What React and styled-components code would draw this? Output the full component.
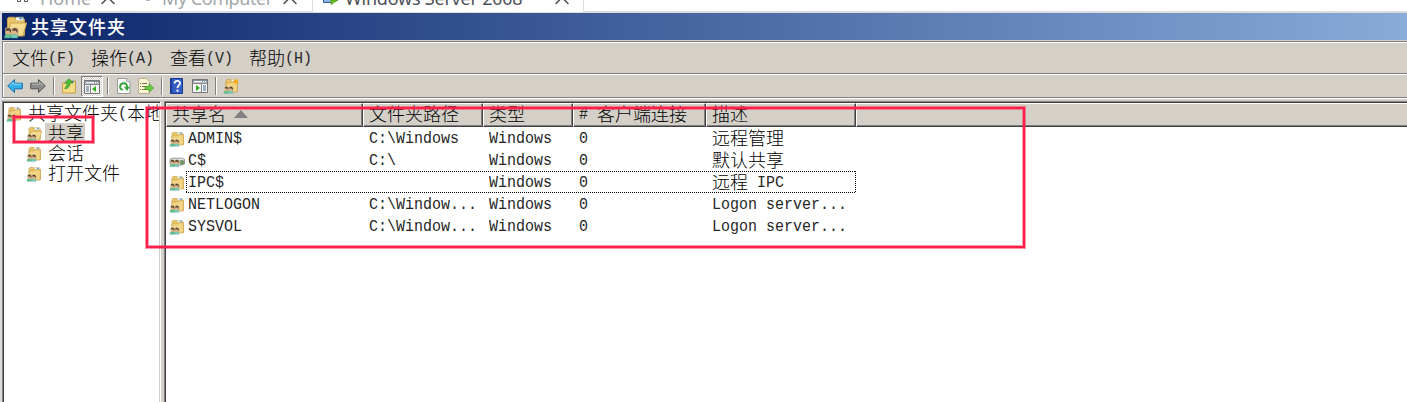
import React from 'react';
import styled, { createGlobalStyle, css } from 'styled-components';

const GlobalStyle = createGlobalStyle`
  * { box-sizing: border-box; }
  body { margin: 0; background: #dcdde1; overflow: hidden; }
  svg { display: block; flex: none; }
`;

const face = '#d4d0c8';
const gray = '#808080';
const dark = '#404040';

const Screen = styled.div`
  position: relative;
  width: 1407px;
  height: 402px;
  overflow: hidden;
  display: flex;
  flex-direction: column;
  font: 300 18px/20px 'Noto Sans CJK SC', sans-serif;
  color: #000;
`;

/* Host tab strip */
const TabStrip = styled.div`
  flex: none;
  display: flex;
  height: 13px;
  overflow: hidden;
`;
const Tab = styled.div`
  display: flex;
  align-items: flex-start;
  justify-content: space-between;
  width: ${(p) => p.$width}px;
  flex: ${(p) => (p.$rest ? '1' : 'none')};
  height: ${(p) => (p.$active ? 12 : 11)}px;
  padding: 0 ${(p) => p.$right || 0}px 0 ${(p) => p.$left || 0}px;
  background: #fff;
  color: ${(p) => (p.$active ? '#4d5159' : '#a3a6ab')};
  ${(p) => p.$active && css`border: solid #dcdde1; border-width: 0 1px;`}
`;
const TabLabel = styled.span`
  display: flex;
  gap: ${(p) => p.$gap}px;
  font: 400 18px/24px 'Noto Sans', sans-serif;
  letter-spacing: ${(p) => p.$spacing || 0}px;
  margin-top: -14px;
  white-space: nowrap;
  svg { margin-top: 14px; }
`;

/* Window */
const Win = styled.div`
  flex: 1;
  min-height: 0;
  margin-left: 2px;
  display: flex;
  flex-direction: column;
  background: ${face};
`;
const TitleBar = styled.div`
  flex: none;
  height: 27px;
  display: flex;
  align-items: center;
  padding: 0 0 2px 1px;
  gap: 4px;
  background: linear-gradient(90deg, #0a246a, #88abd9);
  color: #fff;
  font-weight: 500;
  letter-spacing: 1px;
  svg { margin-top: 2px; }
`;
const Bar = styled.div`
  flex: none;
  display: flex;
  align-items: center;
  height: ${(p) => p.$height}px;
  border-top: 1px solid ${gray};
  border-left: 1px solid ${gray};
  box-shadow: inset 1px 1px #fff;
`;
const MenuBar = styled(Bar)`
  margin-top: 1px;
  padding: 1px 0 0 9px;
  gap: 16px;
`;
const ToolBar = styled(Bar)`
  padding: 1px 0 0 4px;
`;
const ToolGroup = styled.div`
  display: flex;
  align-items: center;
  gap: ${(p) => p.$gap}px;
`;
const PressedTool = styled.div`
  display: flex;
  align-items: center;
  justify-content: center;
  width: 22px;
  height: 21px;
  background: conic-gradient(#fff 25%, ${face} 0 50%, #fff 0 75%, ${face} 0) 0 0 / 2px 2px;
  border: 1px solid;
  border-color: ${gray} #fff #fff ${gray};
  svg { margin-top: 2px; }
`;
const Separator = styled.div`
  width: 2px;
  height: 18px;
  margin: 0 ${(p) => p.$after}px 0 ${(p) => p.$before}px;
  background: linear-gradient(90deg, ${gray} 50%, #fff 50%);
`;
const Gap = styled.div`
  flex: none;
  height: 4px;
  border-top: 1px solid ${gray};
  box-shadow: inset 0 1px #fff;
`;
const Panes = styled.div`
  flex: 1;
  min-height: 0;
  display: flex;
`;
const Pane = styled.div`
  border: solid ${gray};
  border-width: 1px 0 0 1px;
  background: #fff;
  overflow: hidden;
`;
const Tree = styled(Pane)`
  width: 159px;
  flex: none;
  box-shadow: inset 1px 1px ${dark};
  border-right: 1px solid #fff;
  padding: 1px 1px 0 1px;
  background: linear-gradient(90deg, #fff 156px, ${face} 156px);
`;
const TreeInner = styled.div`
  width: 155px;
  overflow: hidden;
`;
const TreeRow = styled.div`
  display: flex;
  align-items: center;
  height: 20px;
  padding-left: ${(p) => (p.$child ? 22 : 2)}px;
  gap: 3px;
  svg { margin-top: 2px; }
`;
const TreeLabel = styled.span`
  display: block;
  height: 20px;
  padding: 0 1px 0 3px;
  white-space: nowrap;
  background: ${(p) => (p.$selected ? face : 'transparent')};
`;
const List = styled(Pane)`
  flex: 1;
  margin-left: 3px;
  box-shadow: inset 1px 1px ${dark};
  padding: 1px 0 0 1px;
`;
const columns = '197px 120px 90px 133px 150px 1fr';
const Header = styled.div`
  display: grid;
  grid-template-columns: ${columns};
  height: 24px;
`;
const HeadCell = styled.div`
  display: flex;
  align-items: center;
  gap: 8px;
  min-width: 0;
  padding: 0 0 2px 5px;
  background: ${face};
  border: 1px solid;
  border-color: #fff ${dark} ${dark} #fff;
  box-shadow: inset -1px -1px ${gray};
  white-space: nowrap;
  &:last-child { border-right: 0; box-shadow: inset 0 -1px ${gray}; }
`;
const Row = styled.div`
  position: relative;
  display: grid;
  grid-template-columns: ${columns};
  align-items: center;
  height: 22px;
`;
const Focus = styled.div`
  position: absolute;
  left: 20px;
  width: 670px;
  top: 0;
  height: 22px;
  background:
    repeating-linear-gradient(90deg, #000 0 1px, transparent 1px 2px) 0 0 / 100% 1px no-repeat,
    repeating-linear-gradient(90deg, #000 0 1px, transparent 1px 2px) 0 100% / 100% 1px no-repeat,
    repeating-linear-gradient(#000 0 1px, transparent 1px 2px) 0 0 / 1px 100% no-repeat,
    repeating-linear-gradient(#000 0 1px, transparent 1px 2px) 100% 0 / 1px 100% no-repeat;
`;
const Cell = styled.div`
  display: flex;
  align-items: center;
  gap: 3px;
  padding-left: ${(p) => (p.$first ? 3 : 6)}px;
  white-space: nowrap;
  svg { margin-top: 2px; }
`;
const Line = styled.span`
  display: flex;
  align-items: flex-start;
  height: 20px;
`;
const Wide = styled.span`
  line-height: 18px;
`;
const Latin = styled.span`
  width: ${(p) => p.$count * 9}px;
  font: 400 17px/22px 'Liberation Mono', monospace;
  color: #262626;
  transform: scaleX(0.882);
  transform-origin: left;
  white-space: pre;
`;

/* Annotation frames lie over the window */
const Frame = styled.div`
  position: absolute;
  left: ${(p) => p.$x}px;
  top: ${(p) => p.$y}px;
  width: ${(p) => p.$w}px;
  height: ${(p) => p.$h}px;
  border: 2px solid #ff1f4b;
  box-shadow: 0 0 0 1px rgba(255, 31, 75, 0.5), inset 0 0 0 1px rgba(255, 31, 75, 0.45);
`;

/* Half-width runs take 9px per character, full-width ones 18px */
function Text({ children }) {
  const runs = children.match(/[\x20-\x7e]+|[^\x20-\x7e]+/g) || [];
  return (
    <Line>
      {runs.map((run, i) =>
        /^[\x20-\x7e]/.test(run)
          ? <Latin key={i} $count={run.length}>{run}</Latin>
          : <Wide key={i}>{run}</Wide>
      )}
    </Line>
  );
}

function People() {
  return (
    <g>
      <path d="M1.500 8.500h9v5.500h-9z" fill="#d9c08a" />
      <path d="M1 15.300c0-1.700.9-2.500 2.300-2.500s2.200.6 2.600 1.500l-1 1z" fill="#62c796" stroke="#3f9f78" strokeWidth=".4" />
      <path d="M5.300 15.300c0-1.700.9-2.500 2.300-2.500s2.300.8 2.300 2.500z" fill="#7fd0c0" stroke="#3f9f90" strokeWidth=".4" />
      <circle cx="3.400" cy="11.300" r="1.500" fill="#e2b48c" />
      <circle cx="7.800" cy="11.300" r="1.500" fill="#e2b48c" />
      <path d="M1.700 10.500c0-2.500 3.500-2.500 3.700 0v1.700l-1.200-1.700zM6.100 10.500c0-2.500 3.500-2.500 3.700 0v1.700l-1.200-1.700z" fill="#5a4430" />
    </g>
  );
}

function SharedFolder({ size = 16, open, star }) {
  return (
    <svg width={size} height={size} viewBox="0 0 16 16">
      <path d="M3 13.500V2.500l1-1h3.500l1 1.500h5.800v10.500z" fill="#e9c568" stroke="#c7a150" strokeWidth=".7" />
      <path d="M8.500 1.500h5v2.300h-5z" fill="#fff" stroke="#c9b67a" strokeWidth=".5" />
      <path d="M10.800 1.800h2v1h-2z" fill="#318ad8" />
      {open
        ? <path d="M3 14 5 5.300h10.700L13.300 14z" fill="#f6dc90" stroke="#cba650" strokeWidth=".7" />
        : <path d="M3 4.800h5l1-1h5.300V14H3z" fill="#f3d583" stroke="#c59f4a" strokeWidth=".7" />}
      <People />
      {star && <path d="m12.500 0 .8 2 2.700-.7-1.500 2.200 1.500 1.600-2.500-.2-1 2-.8-2-2.500-.2 2-1.500-1-2 2 .7z" fill="#f9ad25" />}
    </svg>
  );
}

function SharedDrive() {
  return (
    <svg width="16" height="16" viewBox="0 0 16 16">
      <path d="M1 6.500 3 5.200h10.500l2 1.300v4.500l-2 1H2.500l-1.500-1z" fill="#c3c5c7" stroke="#808284" strokeWidth=".8" />
      <path d="M2.500 6.300h12" stroke="#f2f2f2" />
      <path d="M11.500 7.500h3v3.500h-3z" fill="#555" />
      <path d="M12.200 8h1.500v2.500h-1.500z" fill="#50da24" />
      <g transform="translate(0 -1.800)"><People /></g>
    </svg>
  );
}

function Arrow({ forward }) {
  return (
    <svg width="16" height="16" viewBox="0 0 16 16">
      <g transform={forward ? 'translate(16 0) scale(-1 1)' : undefined}>
        <path d="M.7 8 7.500 1.500v3.700h7.800v5.600H7.500v3.700z" fill={forward ? '#8c8c8c' : '#37afe9'} stroke={forward ? '#555' : '#1470ac'} />
        <path d="m3 7.500 3.500-3.300v2h7.500" fill="none" stroke={forward ? '#bbb' : '#8bdcfb'} />
      </g>
    </svg>
  );
}

function UpFolder() {
  return (
    <svg width="16" height="16" viewBox="0 0 16 16">
      <path d="M1.500 15V5h4l1-2h8v12z" fill="#f6db85" stroke="#c79e46" />
      <path d="M10 3h3v1.500h-3z" fill="#3e92d1" />
      <path d="m4.500 11-1-1c2-1 2.500-3 2.500-5H3.500L8 .8 12 5H9c0 3-1.500 5-4.500 6z" fill="#51bd35" stroke="#278622" strokeWidth=".6" />
    </svg>
  );
}

function PanelIcon({ right }) {
  return (
    <svg width="16" height="14" viewBox="0 0 16 14">
      <path d="M.5.500h15v13H.500z" fill="#f4f4f2" stroke="#74787c" />
      <path d="M1 1h14v2.500H1z" fill="#87919b" />
      <path d="M2 2.500h8M11 2.500h1M13 2.500h1" stroke="#fff" />
      <path d={right ? 'M9.500 5v8M1 4.500h14' : 'M6.500 5v8M1 4.500h14'} stroke="#888" />
      <path d={right ? 'M11 7h3M11 9h3M11 11h3' : 'M2 7h3M2 9h3M2 11h3'} stroke="#4b6e8e" />
      <path d={right ? 'm4 6 4 3-4 3z' : 'm12 6-4 3 4 3z'} fill="#2eae22" />
    </svg>
  );
}

function Refresh() {
  return (
    <svg width="14" height="16" viewBox="0 0 14 16">
      <path d="M.5.500h9l3.500 3v12H.500z" fill="#fafafa" stroke="#9b9b9b" />
      <path d="M9.500.500v3H13" fill="#ddd" stroke="#aaa" />
      <path d="M5.500 12A3.500 3.500 0 1 1 10 9.500" fill="none" stroke="#32a332" strokeWidth="2" />
      <path d="M7 8.800h5.800L10 13z" fill="#32a332" />
    </svg>
  );
}

function Export() {
  return (
    <svg width="16" height="16" viewBox="0 0 16 16">
      <path d="M.5.500h8l3 3v12H.500z" fill="#fdf6d2" stroke="#b5ad90" />
      <path d="M2 5.500h1M4 5.500h5M2 8.500h1M4 8.500h4M2 11.500h1M4 11.500h5" stroke="#766f5c" />
      <path d="M7 8.500h4V5.800l4.700 4.200L11 14.200v-2.700H7z" fill="#69cb41" stroke="#369d23" strokeWidth=".7" />
    </svg>
  );
}

function Help() {
  return (
    <svg width="14" height="16" viewBox="0 0 14 16">
      <path d="M.5.500h12v15H.500z" fill="#345fc7" stroke="#183a91" />
      <path d="M1.500 1v14" stroke="#1c3f9d" strokeWidth="1.500" />
      <path d="M4.500 5.500c0-3.500 5.500-3.500 5.500-.3C10 7.500 7.500 7.500 7.500 10" fill="none" stroke="#fff" strokeWidth="1.700" />
      <path d="M6.500 11.700h2v2h-2z" fill="#fff" />
    </svg>
  );
}

function CloseMark() {
  return (
    <svg width="14" height="6" viewBox="0 0 14 6">
      <path d="m0.500 4 6.500-6.500L13.500 4" fill="none" stroke="#4b4e55" strokeWidth="1.500" />
    </svg>
  );
}

const shares = [
  ['ADMIN$', 'C:\\Windows', '远程管理'],
  ['C$', 'C:\\', '默认共享'],
  ['IPC$', '', '远程 IPC'],
  ['NETLOGON', 'C:\\Window...', 'Logon server...'],
  ['SYSVOL', 'C:\\Window...', 'Logon server...'],
];

export default function App() {
  return (
    <Screen>
      <GlobalStyle />
      <TabStrip>
        <Tab $width={130} $left={17} $right={15}>
          <TabLabel $gap={11}>
            <svg width="12" height="3" viewBox="0 0 12 3">
              <path d="M.5 0v1.500h3V0M7.500 0v1.500h3V0" fill="none" stroke="#555" />
            </svg>
            Home
          </TabLabel>
          <CloseMark />
        </Tab>
        <Tab $width={182} $left={16} $right={15}>
          <TabLabel $gap={11} $spacing={-0.45}>
            <svg width="5" height="3" viewBox="0 0 5 3"><path d="M0 .500h4" stroke="#a9b1c6" /></svg>
            My Computer
          </TabLabel>
          <CloseMark />
        </Tab>
        <Tab $active $width={272} $left={10} $right={14}>
          <TabLabel $gap={6} $spacing={-0.22}>
            <svg width="16" height="5" viewBox="0 0 16 5">
              <path d="M.5 0v2.500h9V0" fill="#8eb4e3" stroke="#315a97" />
              <path d="M8 0v4.500L15 0z" fill="#77c51f" stroke="#3e8c0f" strokeWidth=".7" />
            </svg>
            Windows Server 2008
          </TabLabel>
          <CloseMark />
        </Tab>
        <Tab $rest />
      </TabStrip>

      <Win>
        <TitleBar><SharedFolder size={24} open />共享文件夹</TitleBar>
        <MenuBar $height={32}>
          {['文件(F)', '操作(A)', '查看(V)', '帮助(H)'].map((m) => <Text key={m}>{m}</Text>)}
        </MenuBar>
        <ToolBar $height={24}>
          <ToolGroup $gap={7}><Arrow /><Arrow forward /></ToolGroup>
          <Separator $before={7} $after={6} />
          <ToolGroup $gap={4}><UpFolder /><PressedTool><PanelIcon /></PressedTool></ToolGroup>
          <Separator $before={4} $after={8} />
          <ToolGroup $gap={7}><Refresh /><Export /></ToolGroup>
          <Separator $before={7} $after={7} />
          <ToolGroup $gap={8}><Help /><PanelIcon right /></ToolGroup>
          <Separator $before={7} $after={6} />
          <SharedFolder star />
        </ToolBar>
        <Gap />
        <Panes>
          <Tree>
            <TreeInner>
              <TreeRow><SharedFolder /><TreeLabel><Text>共享文件夹(本地)</Text></TreeLabel></TreeRow>
              <TreeRow $child><SharedFolder open /><TreeLabel $selected><Text>共享</Text></TreeLabel></TreeRow>
              <TreeRow $child><SharedFolder /><TreeLabel><Text>会话</Text></TreeLabel></TreeRow>
              <TreeRow $child><SharedFolder /><TreeLabel><Text>打开文件</Text></TreeLabel></TreeRow>
            </TreeInner>
          </Tree>
          <List>
            <Header>
              <HeadCell>
                <Text>共享名</Text>
                <svg width="14" height="8" viewBox="0 0 14 8"><path d="M7 0 14 8H0z" fill="#808080" /></svg>
              </HeadCell>
              {['文件夹路径', '类型', '# 客户端连接', '描述'].map((h) => (
                <HeadCell key={h}><Text>{h}</Text></HeadCell>
              ))}
              <HeadCell />
            </Header>
            {shares.map(([name, path, note]) => (
              <Row key={name}>
                <Cell $first>{name === 'C$' ? <SharedDrive /> : <SharedFolder />}<Text>{name}</Text></Cell>
                <Cell><Text>{path}</Text></Cell>
                <Cell><Text>Windows</Text></Cell>
                <Cell><Text>0</Text></Cell>
                <Cell><Text>{note}</Text></Cell>
                {name === 'IPC$' && <Focus />}
              </Row>
            ))}
          </List>
        </Panes>
      </Win>
      <Frame $x={13} $y={116} $w={81} $h={27} />
      <Frame $x={146} $y={107} $w={879} $h={141} />
    </Screen>
  );
}
